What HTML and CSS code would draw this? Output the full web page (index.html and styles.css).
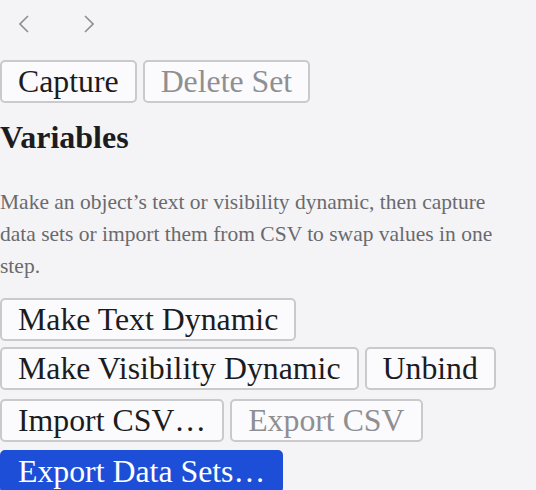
FILE: index.html
```html
<!DOCTYPE html>
<html lang="en">

<head>
    <meta charset="UTF-8">
    <meta name="viewport" content="width=device-width, initial-scale=1.0">
    <title>Variables</title>
    <link rel="stylesheet" href="styles.css">
</head>

<body>
    <div class="panel">
        <div class="set-nav">
            <button class="nav-btn" id="prevSet" title="Previous set">
                <svg width="10" height="18" viewBox="0 0 10 18">
                    <polyline points="9,1 1,9 9,17" />
                </svg>
            </button>
            <button class="nav-btn" id="nextSet" title="Next set">
                <svg width="10" height="18" viewBox="0 0 10 18">
                    <polyline points="1,1 9,9 1,17" />
                </svg>
            </button>
        </div>

        <div class="btn-row">
            <button class="btn">Capture</button>
            <button class="btn" disabled>Delete Set</button>
        </div>

        <h2 class="panel-title">Variables</h2>
        <p class="panel-help">Make an object’s text or visibility dynamic, then capture data sets or import them from CSV to swap values in one step.</p>

        <div class="btn-row">
            <button class="btn">Make Text Dynamic</button>
            <button class="btn">Make Visibility Dynamic</button>
            <button class="btn">Unbind</button>
        </div>
        <div class="btn-row spaced">
            <button class="btn">Import CSV…</button>
            <button class="btn" disabled>Export CSV</button>
        </div>
        <div class="btn-row spaced">
            <button class="btn primary">Export Data Sets…</button>
        </div>
    </div>
</body>

</html>
```

FILE: styles.css
```css
body {
    margin: 0;
    background: #f4f4f6;
    font-family: "Liberation Serif", "Times New Roman", serif;
    color: #1c1c1e;
}

.panel {
    padding: 0 16px 0 0;
}

/* previous / next data set */
.set-nav {
    display: flex;
    gap: 18px;
    height: 48px;
    margin-bottom: 12px;
}

.nav-btn {
    width: 47px;
    height: 48px;
    padding: 0;
    border: none;
    background: none;
    display: flex;
    align-items: center;
    justify-content: center;
    cursor: pointer;
}

.nav-btn svg polyline {
    fill: none;
    stroke: #8e8e93;
    stroke-width: 1.6;
}

.btn-row {
    display: flex;
    flex-wrap: wrap;
    gap: 6px;
}

.btn-row.spaced {
    margin-top: 8.5px;
}

.btn {
    font-family: inherit;
    font-size: 31.8px;
    line-height: 37px;
    color: #1c1c1e;
    background: #fbfbfd;
    border: 2px solid #cacacc;
    border-radius: 5px;
    padding: 1px 16px;
    cursor: pointer;
}

.btn:disabled {
    color: #8f8f92;
    cursor: default;
}

.btn.primary {
    background: #1d4ed8;
    border-color: #1d4ed8;
    color: #fff;
}

.panel-title {
    font-size: 32px;
    line-height: 36px;
    font-weight: bold;
    margin: 16px 0 0;
}

.panel-help {
    font-size: 21.5px;
    line-height: 32px;
    color: #6a6a6e;
    margin: 31px 0 16px;
}
```
